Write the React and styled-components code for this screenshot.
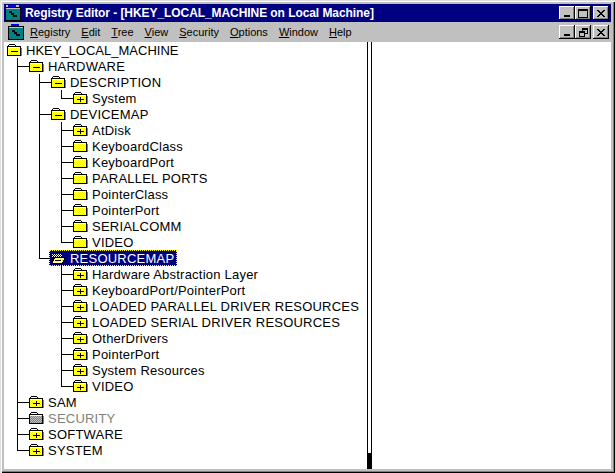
import React from 'react';
import styled, { createGlobalStyle } from 'styled-components';

const GlobalStyle = createGlobalStyle`
  html, body {
    margin: 0;
    padding: 0;
    background: #c0c0c0;
  }
  body {
    font-family: "Liberation Sans", Arial, sans-serif;
    font-size: 13px;
  }
`;

const Window = styled.div`
  box-sizing: border-box;
  width: 615px;
  height: 473px;
  padding: 4px;
  display: flex;
  flex-direction: column;
  background: #c0c0c0;
  box-shadow: inset 1px 1px 0 #dfdfdf, inset 2px 2px 0 #fff, inset -1px -1px 0 #000, inset -2px -2px 0 #808080;
`;
const TitleBar = styled.div`
  height: 18px;
  flex: none;
  display: flex;
  align-items: center;
  background: #000080;
  color: #fff;
  padding: 0 2px 0 1px;
`;
const TitleText = styled.span`
  flex: 1;
  margin-left: 4px;
  font-weight: bold;
  font-size: 12px;
  letter-spacing: -0.07px;
  white-space: nowrap;
`;
const MenuBar = styled.div`
  height: 20px;
  flex: none;
  display: flex;
  align-items: center;
  padding: 0 2px 0 4px;
`;
const MenuItems = styled.div`
  flex: 1;
  display: flex;
  gap: 11px;
  margin-left: 6px;
  font-size: 11px;
  color: #000;
`;
const Key = styled.span`
  text-decoration: underline;
`;
const WinButtons = styled.div`
  display: flex;
`;
const WinButton = styled.div`
  box-sizing: border-box;
  width: 16px;
  height: 14px;
  margin-left: ${(p) => (p.$gap ? '2px' : '0')};
  display: flex;
  align-items: center;
  justify-content: center;
  background: #c0c0c0;
  box-shadow: inset -1px -1px 0 #000, inset 1px 1px 0 #fff, inset -2px -2px 0 #808080;
`;
const Content = styled.div`
  flex: 1;
  min-height: 0;
  display: flex;
  background: #fff;
`;
const TreePane = styled.div`
  box-sizing: border-box;
  width: 363px;
  flex: none;
  padding-left: 3px;
`;
const Splitter = styled.div`
  width: 5px;
  flex: none;
  box-sizing: border-box;
  border-left: 1px solid #000;
  border-right: 1px solid #000;
  display: flex;
  align-items: flex-end;
  background: #fff;
`;
const SplitterThumb = styled.div`
  width: 100%;
  height: 16px;
  background: #000;
`;
const ListPane = styled.div`
  flex: 1;
`;
const Row = styled.div`
  height: 16px;
  display: flex;
  align-items: center;
`;
const guideImages = {
  pipe: 'linear-gradient(#000,#000)',
  tee: 'linear-gradient(#000,#000), linear-gradient(#000,#000)',
  elbow: 'linear-gradient(#000,#000), linear-gradient(#000,#000)',
};
const guideSizes = {
  pipe: '1px 16px',
  tee: '1px 16px, 12px 1px',
  elbow: '1px 9px, 12px 1px',
};
const Guide = styled.div`
  width: 22px;
  height: 16px;
  flex: none;
  background-repeat: no-repeat;
  background-image: ${(p) => guideImages[p.$kind] || 'none'};
  background-size: ${(p) => guideSizes[p.$kind] || 'auto'};
  background-position: ${(p) => (p.$kind === 'pipe' ? '10px 0' : '10px 0, 10px 8px')};
`;
const Label = styled.span`
  display: flex;
  align-items: center;
  height: 16px;
  margin-left: ${(p) => (p.$selected ? '-2px' : '0')};
  color: ${(p) => (p.$selected ? '#fff' : p.$dim ? '#808080' : '#000')};
  background: ${(p) => (p.$selected ? '#000080' : 'transparent')};
  outline: ${(p) => (p.$selected ? '1px dotted #ffff00' : 'none')};
  outline-offset: -1px;
  padding: ${(p) => (p.$selected ? '0 3px 0 1px' : '0')};
  white-space: nowrap;
`;
const LabelText = styled.span`
  margin-left: 4px;
  letter-spacing: ${(p) => (p.$tight ? '0' : '0.22px')};
`;

function AppIcon() {
  return (
    <svg width="16" height="16" viewBox="0 0 16 16" shapeRendering="crispEdges">
      <rect x="0" y="2" width="16" height="14" fill="#000" />
      <rect x="1" y="3" width="14" height="12" fill="#008080" />
      <rect x="1" y="3" width="14" height="1" fill="#c0c0c0" />
      <rect x="3" y="0" width="8" height="2" fill="#0000ff" />
      <rect x="1" y="0" width="2" height="2" fill="#c0c0c0" />
      <rect x="11" y="0" width="3" height="2" fill="#c0c0c0" />
      <rect x="4" y="6" width="3" height="2" fill="#000" />
      <rect x="6" y="8" width="3" height="2" fill="#000" />
      <rect x="8" y="10" width="4" height="2" fill="#000" />
    </svg>
  );
}

// every second pixel of a rectangle, for the old 16 colour dither on the folders
const checker = (x0, y0, w, h) => {
  let d = '';
  for (let y = y0; y < y0 + h; y++) {
    for (let x = x0; x < x0 + w; x++) {
      if ((x + y) % 2 === 0) d += `M${x} ${y}h1v1h-1z`;
    }
  }
  return d;
};
const closedDither = checker(1, 4, 12, 7);
const openBackDither = checker(2, 2, 10, 3);

function Folder({ sign, open, gray }) {
  if (open) {
    return (
      <svg width="16" height="12" viewBox="0 0 16 12" shapeRendering="crispEdges">
        <path d="M1 11V1H7V2H12V5H5L1 11Z" fill="#000" />
        <path d={openBackDither} fill="#fff" />
        <path d="M1 11L5 5H16L12 11Z" fill="#ffff80" />
        <path d="M1.5 11.5H12.5L15.5 5.5H4.5L1.5 11.5Z" fill="none" stroke="#000" />
        <rect x="5" y="8" width="6" height="1" fill="#000" />
      </svg>
    );
  }
  return (
    <svg width="15" height="12" viewBox="0 0 15 12" shapeRendering="crispEdges">
      <path d="M1.5 2.5V1.5L2.5 0.5H7.5L8.5 1.5V2.5" fill="#fff" stroke="#000" />
      <rect x="0.5" y="2.5" width="13" height="9" fill={gray ? '#c0c0c0' : '#ffff00'} stroke="#000" />
      <rect x="1" y="3" width="12" height="1" fill="#fff" />
      <path d={closedDither} fill={gray ? '#808080' : '#fff'} />
      <rect x="14" y="4" width="1" height="8" fill="#808080" />
      {sign && <rect x="4" y="7" width="7" height="1" fill="#000" />}
      {sign === '+' && <rect x="7" y="5" width="1" height="5" fill="#000" />}
    </svg>
  );
}

const tree = [
  { g: [], text: 'HKEY_LOCAL_MACHINE', sign: '-', tight: true },
  { g: ['tee'], text: 'HARDWARE', sign: '-' },
  { g: ['pipe', 'tee'], text: 'DESCRIPTION', sign: '-' },
  { g: ['pipe', 'pipe', 'elbow'], text: 'System', sign: '+' },
  { g: ['pipe', 'tee'], text: 'DEVICEMAP', sign: '-' },
  { g: ['pipe', 'pipe', 'tee'], text: 'AtDisk', sign: '+' },
  { g: ['pipe', 'pipe', 'tee'], text: 'KeyboardClass' },
  { g: ['pipe', 'pipe', 'tee'], text: 'KeyboardPort' },
  { g: ['pipe', 'pipe', 'tee'], text: 'PARALLEL PORTS' },
  { g: ['pipe', 'pipe', 'tee'], text: 'PointerClass' },
  { g: ['pipe', 'pipe', 'tee'], text: 'PointerPort' },
  { g: ['pipe', 'pipe', 'tee'], text: 'SERIALCOMM' },
  { g: ['pipe', 'pipe', 'elbow'], text: 'VIDEO' },
  { g: ['pipe', 'elbow'], text: 'RESOURCEMAP', open: true, selected: true },
  { g: ['pipe', null, 'tee'], text: 'Hardware Abstraction Layer', sign: '+' },
  { g: ['pipe', null, 'tee'], text: 'KeyboardPort/PointerPort', sign: '+' },
  { g: ['pipe', null, 'tee'], text: 'LOADED PARALLEL DRIVER RESOURCES', sign: '+' },
  { g: ['pipe', null, 'tee'], text: 'LOADED SERIAL DRIVER RESOURCES', sign: '+' },
  { g: ['pipe', null, 'tee'], text: 'OtherDrivers', sign: '+' },
  { g: ['pipe', null, 'tee'], text: 'PointerPort', sign: '+' },
  { g: ['pipe', null, 'tee'], text: 'System Resources', sign: '+' },
  { g: ['pipe', null, 'elbow'], text: 'VIDEO', sign: '+' },
  { g: ['tee'], text: 'SAM', sign: '+' },
  { g: ['tee'], text: 'SECURITY', gray: true },
  { g: ['tee'], text: 'SOFTWARE', sign: '+' },
  { g: ['elbow'], text: 'SYSTEM', sign: '+' },
];

function App() {
  return (
    <>
      <GlobalStyle />
      <Window>
        <TitleBar>
          <AppIcon />
          <TitleText>Registry Editor - [HKEY_LOCAL_MACHINE on Local Machine]</TitleText>
          <WinButtons>
            <WinButton><svg width="8" height="8"><rect x="1" y="6" width="6" height="2" /></svg></WinButton>
            <WinButton><svg width="10" height="9" shapeRendering="crispEdges"><path d="M.5 .5H9.5V8.5H.5Z" fill="none" stroke="#000" /><rect width="10" height="2" /></svg></WinButton>
            <WinButton $gap><svg width="8" height="7" shapeRendering="crispEdges"><path d="M0 0L7 7M1 0L8 7M7 0L0 7M8 0L1 7" stroke="#000" /></svg></WinButton>
          </WinButtons>
        </TitleBar>
        <MenuBar>
          <AppIcon />
          <MenuItems>
            <span><Key>R</Key>egistry</span>
            <span><Key>E</Key>dit</span>
            <span><Key>T</Key>ree</span>
            <span><Key>V</Key>iew</span>
            <span><Key>S</Key>ecurity</span>
            <span><Key>O</Key>ptions</span>
            <span><Key>W</Key>indow</span>
            <span><Key>H</Key>elp</span>
          </MenuItems>
          <WinButtons>
            <WinButton><svg width="8" height="8"><rect x="1" y="6" width="6" height="2" /></svg></WinButton>
            <WinButton><svg width="9" height="9" shapeRendering="crispEdges"><path d="M3.5 3V.5H8.5V5.5H6M.5 3.5H5.5V8.5H.5Z" fill="none" stroke="#000" /><rect x="3" width="6" height="2" /><rect y="3" width="6" height="2" /></svg></WinButton>
            <WinButton $gap><svg width="8" height="7" shapeRendering="crispEdges"><path d="M0 0L7 7M1 0L8 7M7 0L0 7M8 0L1 7" stroke="#000" /></svg></WinButton>
          </WinButtons>
        </MenuBar>
        <Content>
          <TreePane>
            {tree.map((item, i) => (
              <Row key={i}>
                {item.g.map((kind, j) => (
                  <Guide key={j} $kind={kind} />
                ))}
                <Label $selected={item.selected} $dim={item.gray}>
                  <Folder sign={item.sign} open={item.open} gray={item.gray} />
                  <LabelText $tight={item.tight}>{item.text}</LabelText>
                </Label>
              </Row>
            ))}
          </TreePane>
          <Splitter>
            <SplitterThumb />
          </Splitter>
          <ListPane />
        </Content>
      </Window>
    </>
  );
}

export default App;
